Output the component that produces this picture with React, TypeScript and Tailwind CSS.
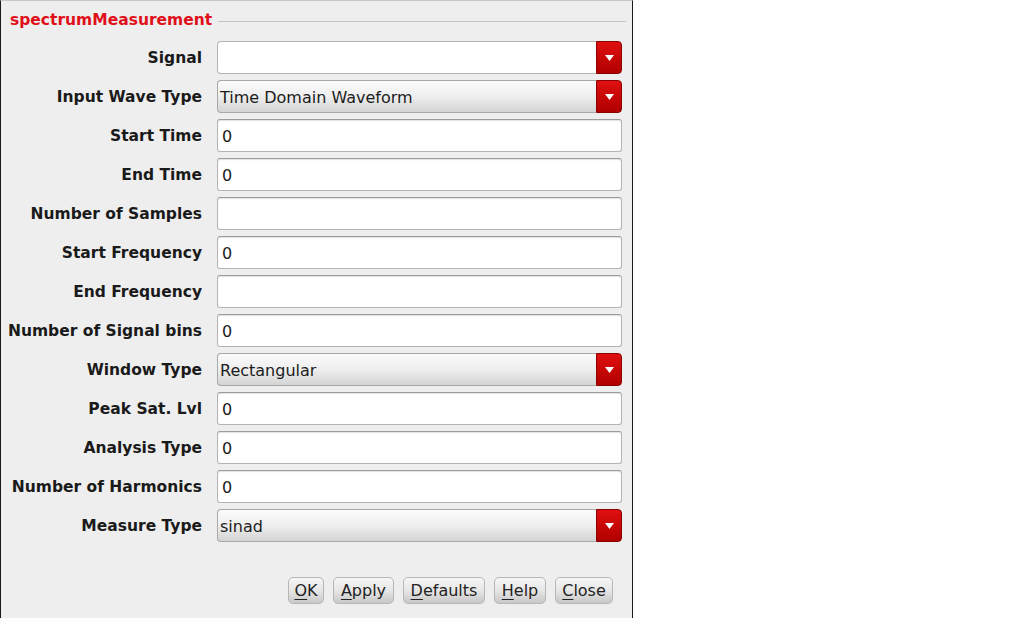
import React from "react";

type Row = { label: string; kind: "entry" | "combo" | "ecombo"; value: string };

const rows: Row[] = [
  { label: "Signal", kind: "ecombo", value: "" },
  { label: "Input Wave Type", kind: "combo", value: "Time Domain Waveform" },
  { label: "Start Time", kind: "entry", value: "0" },
  { label: "End Time", kind: "entry", value: "0" },
  { label: "Number of Samples", kind: "entry", value: "" },
  { label: "Start Frequency", kind: "entry", value: "0" },
  { label: "End Frequency", kind: "entry", value: "" },
  { label: "Number of Signal bins", kind: "entry", value: "0" },
  { label: "Window Type", kind: "combo", value: "Rectangular" },
  { label: "Peak Sat. Lvl", kind: "entry", value: "0" },
  { label: "Analysis Type", kind: "entry", value: "0" },
  { label: "Number of Harmonics", kind: "entry", value: "0" },
  { label: "Measure Type", kind: "combo", value: "sinad" },
];

const DropButton = () => (
  <div className="flex w-[26px] shrink-0 items-center justify-center rounded-r-[4px] border border-[#8a0000] bg-gradient-to-b from-[#e01010] to-[#b00000]">
    <svg width="9" height="6" viewBox="0 0 9 6">
      <path d="M0 0 H9 L4.5 6 Z" fill="#fff" />
    </svg>
  </div>
);

const Field = ({ row }: { row: Row }) => {
  if (row.kind === "entry") {
    return (
      <div className="flex h-[33px] items-center rounded-[3px] border border-[#b4b4b4] border-t-[#9c9c9c] bg-white px-[4px] pt-[2px] shadow-[inset_0_1px_1px_rgba(0,0,0,0.12)]">
        {row.value}
      </div>
    );
  }
  const body =
    row.kind === "ecombo"
      ? "bg-white border-[#b4b4b4]"
      : "bg-gradient-to-b from-[#fbfbfb] via-[#eeeeee] to-[#d4d4d4] border-[#a8a8a8]";
  return (
    <div className="flex h-[33px]">
      <div className={`flex flex-1 items-center rounded-l-[4px] border border-r-0 px-[2px] pt-[2px] ${body}`}>
        {row.value}
      </div>
      <DropButton />
    </div>
  );
};

const Btn = ({ k, rest, w }: { k: string; rest: string; w: string }) => (
  <button
    className={`flex h-[27px] items-center justify-center rounded-[5px] border border-[#b6b6b6] bg-gradient-to-b from-[#f6f6f6] via-[#e6e6e6] to-[#c8c8c8] text-[16px] text-[#222] ${w}`}
  >
    <span className="underline decoration-1 underline-offset-[3px]">{k}</span>
    <span>{rest}</span>
  </button>
);

export default function App() {
  return (
    <div className="min-h-screen bg-white" style={{ fontFamily: '"DejaVu Sans", sans-serif' }}>
      <div className="flex h-[618px] w-[633px] flex-col border-x border-x-[#1a1a1a] border-t border-t-[#c8c8c8] bg-[#eeeeee] text-[16px] text-[#1c1c1c]">
        <div className="mt-[10px] flex h-[20px] items-center pl-[9px] pr-[6px]">
          <span className="text-[15.5px] font-bold text-[#e0101a]">spectrumMeasurement</span>
          <div className="ml-[6px] h-px flex-1 bg-[#c4c4c4]" />
        </div>
        <div className="mt-[10px] grid grid-cols-[201px_1fr] gap-x-[15px] gap-y-[6px] pr-[10px]">
          {rows.map((r) => (
            <React.Fragment key={r.label}>
              <div className="flex h-[33px] items-center justify-end whitespace-nowrap pt-[2px] text-[15.5px] font-bold text-[#1a1a1a]">
                {r.label}
              </div>
              <Field row={r} />
            </React.Fragment>
          ))}
        </div>
        <div className="mt-[35px] flex justify-end gap-[9px] pr-[19px]">
          <Btn k="O" rest="K" w="w-[36px]" />
          <Btn k="A" rest="pply" w="w-[61px]" />
          <Btn k="D" rest="efaults" w="w-[82px]" />
          <Btn k="H" rest="elp" w="w-[52px]" />
          <Btn k="C" rest="lose" w="w-[58px]" />
        </div>
      </div>
    </div>
  );
}
